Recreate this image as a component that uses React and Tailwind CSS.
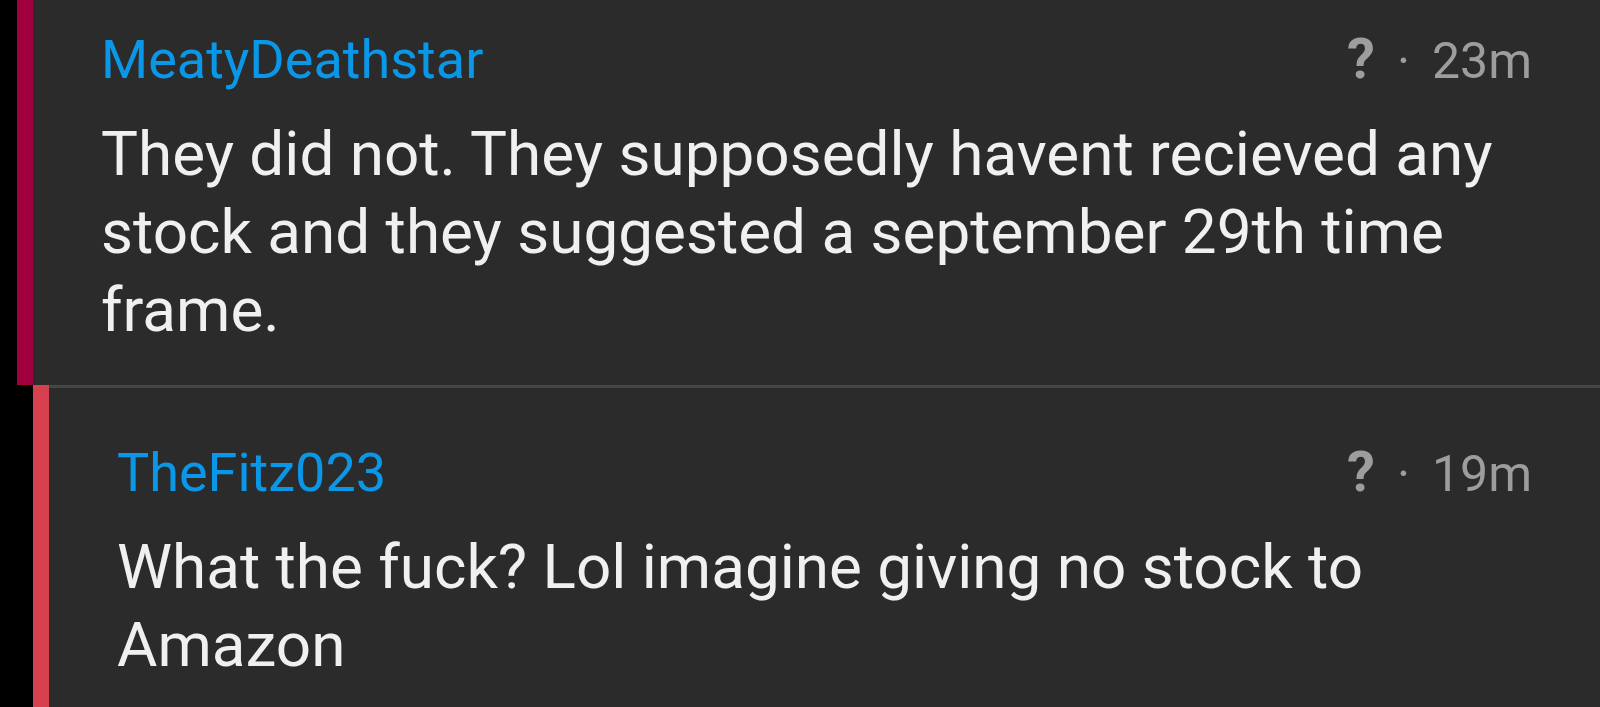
export default function App() {
  const comments = [
    {
      id: 1,
      user: "MeatyDeathstar",
      time: "23m",
      body: "They did not. They supposedly havent recieved any stock and they suggested a september 29th time frame.",
      indent: "ml-[17px]",
      bar: "bg-[#a1003f]",
      top: "pt-[27px] pb-[36px]",
      divider: false,
    },
    {
      id: 2,
      user: "TheFitz023",
      time: "19m",
      body: "What the fuck? Lol imagine giving no stock to Amazon",
      indent: "ml-[33px]",
      bar: "bg-[#d7404f]",
      top: "pt-[52px] pb-[40px]",
      divider: true,
    },
  ];

  return (
    <div className="h-[707px] w-full overflow-hidden bg-black font-['Roboto','Liberation_Sans',sans-serif]">
      {comments.map((c) => (
        <div key={c.id} className={`flex ${c.indent}`}>
          {/* Thread depth bar */}
          <div className={`w-[16px] shrink-0 ${c.bar}`}></div>
          <div
            className={`flex-1 bg-[#2b2b2b] ${c.divider ? "border-t-[3px] border-[#464646]" : ""}`}
          >
            <div className={`pl-[68px] pr-[68px] ${c.top}`}>
              {/* Header */}
              <div className="flex items-baseline justify-between leading-[64px]">
                <span className="text-[54px] text-[#0b97e8]">{c.user}</span>
                <span className="flex items-baseline text-[50px] text-[#9d9d9d]">
                  <span className="text-[56px] font-bold">?</span>
                  <span className="mx-[22px]">·</span>
                  <span>{c.time}</span>
                </span>
              </div>
              {/* Body */}
              <p className="mt-[22px] text-[62px] leading-[78px] text-[#f0f0f0]">{c.body}</p>
            </div>
          </div>
        </div>
      ))}
    </div>
  );
}
